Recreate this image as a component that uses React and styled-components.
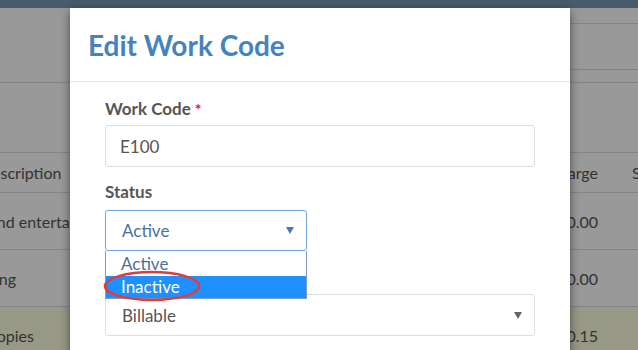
import styled, { createGlobalStyle } from "styled-components";

const GlobalStyle = createGlobalStyle`
  html, body {
    margin: 0;
    padding: 0;
    background: #ffffff;
    font-family: Lato, "Liberation Sans", sans-serif;
  }
`;

//background page
const Page = styled.div`
  position: relative;
  width: 638px;
  height: 350px;
  overflow: hidden;
  background: #ffffff;
  color: #555555;
`;

const TopBar = styled.div`
  height: 8px;
  background: #7b96b1;
`;

const PageHeader = styled.div`
  height: 75px;
  border-bottom: 1px solid #dddddd;
  display: flex;
  justify-content: flex-end;
  padding-top: 15px;
  box-sizing: border-box;
`;

const Toolbar = styled.div`
  width: 160px;
  height: 45px;
  border-top: 1px solid #dddddd;
  border-bottom: 1px solid #dddddd;
`;

const Spacer = styled.div`
  height: 69px;
`;

const Table = styled.div`
  display: grid;
  grid-template-columns: 582px 78px 60px;
  margin-left: -${(p) => p.$shift}px;
  width: 720px;
  font-size: 16px;
`;

const Row = styled.div`
  display: contents;
`;

const Cell = styled.div`
  height: ${(p) => (p.$head ? 39 : 56)}px;
  border-top: 1px solid #dddddd;
  display: flex;
  align-items: center;
  justify-content: ${(p) => (p.$right ? "flex-end" : "flex-start")};
  padding-left: ${(p) => p.$indent || 0}px;
  background: ${(p) => (p.$warn ? "#fefee0" : "transparent")};
  white-space: nowrap;
  overflow: hidden;
`;

const Backdrop = styled.div`
  position: absolute;
  inset: 0;
  background: rgba(0, 0, 0, 0.4);
`;

//modal
const Modal = styled.div`
  position: absolute;
  left: 70px;
  top: 8px;
  width: 500px;
  height: 360px;
  background: #ffffff;
  box-shadow: 0 3px 9px rgba(0, 0, 0, 0.5);
`;

const ModalHeader = styled.div`
  height: 73px;
  border-bottom: 1px solid #e5e5e5;
  padding: 0 18px;
  display: flex;
  align-items: center;
`;

const Title = styled.h4`
  margin: 0;
  font-size: 28px;
  font-weight: 700;
  color: #4583bf;
`;

const ModalBody = styled.div`
  padding: 17px 35px 0;
`;

const Group = styled.div`
  margin-bottom: 15px;
`;

const Label = styled.label`
  display: block;
  font-size: 17px;
  line-height: 20px;
  font-weight: 700;
  color: #555555;
  margin-bottom: ${(p) => p.$gap || 6}px;

  span {
    color: #e02020;
    font-size: 16px;
    margin-left: 4px;
  }
`;

const Input = styled.div`
  height: 42px;
  box-sizing: border-box;
  border: 1px solid #dddddd;
  border-radius: 3px;
  padding: 0 14px;
  display: flex;
  align-items: center;
  font-size: 17px;
  color: #555555;
`;

const SelectWrap = styled.div`
  position: relative;
  width: ${(p) => p.$width || "100%"};
`;

const Select = styled.div`
  height: ${(p) => (p.$focus ? 41 : 42)}px;
  box-sizing: border-box;
  border: 1px solid ${(p) => (p.$focus ? "#6ea1d9" : "#dddddd")};
  border-radius: 3px;
  padding: 0 12px 0 16px;
  display: flex;
  align-items: center;
  justify-content: space-between;
  font-size: 17px;
  color: ${(p) => (p.$focus ? "#4d6f9c" : "#555555")};
`;

const Arrow = styled.span`
  width: 0;
  height: 0;
  border-left: 4px solid transparent;
  border-right: 4px solid transparent;
  border-top: 7px solid ${(p) => (p.$focus ? "#4a7ab5" : "#666666")};
`;

const Options = styled.ul`
  position: absolute;
  left: 0;
  right: 0;
  top: 100%;
  margin: 0;
  padding: 0;
  list-style: none;
  border: 1px solid #7f9db9;
  border-top: none;
  background: #ffffff;
  z-index: 2;
`;

const Option = styled.li`
  height: ${(p) => (p.$selected ? 22 : 25)}px;
  line-height: ${(p) => (p.$selected ? 22 : 25)}px;
  padding-left: 15px;
  font-size: 17px;
  color: ${(p) => (p.$selected ? "#ffffff" : "#4d6f9c")};
  background: ${(p) => (p.$selected ? "#1e90ff" : "#ffffff")};
`;

const Mark = styled.svg`
  position: absolute;
  left: -3px;
  top: 20px;
  z-index: 3;
  overflow: visible;
`;

const rows = [
  { desc: "Meals and entertainment", indent: 5, charge: "0.00" },
  { desc: "Printing", indent: 23, charge: "0.00" },
  { desc: "Photocopies", indent: 9, charge: "0.15", warn: true },
];

const App = () => {
  return (
    <>
      <GlobalStyle />
      <Page>
        <TopBar />
        <PageHeader>
          <Toolbar />
        </PageHeader>
        <Spacer />
        <Table $shift={62}>
          <Row>
            <Cell $head $indent={42}>Description</Cell>
            <Cell $head $right>Charge</Cell>
            <Cell $head $indent={34}>Status</Cell>
          </Row>
          {rows.map((r) => (
            <Row key={r.desc}>
              <Cell $warn={r.warn} $indent={r.indent}>
                {r.desc}
              </Cell>
              <Cell $warn={r.warn} $right>
                {r.charge}
              </Cell>
              <Cell $warn={r.warn} />
            </Row>
          ))}
        </Table>
        <Backdrop />

        <Modal>
          <ModalHeader>
            <Title>Edit Work Code</Title>
          </ModalHeader>
          <ModalBody>
            <Group>
              <Label>
                Work Code<span>*</span>
              </Label>
              <Input>E100</Input>
            </Group>
            <Group>
              <Label $gap={8}>Status</Label>
              <SelectWrap $width="202px">
                <Select $focus>
                  Active
                  <Arrow $focus />
                </Select>
                <Options>
                  <Option>Active</Option>
                  <Option $selected>Inactive</Option>
                  <Mark width="100" height="32">
                    <ellipse
                      cx="49"
                      cy="15"
                      rx="47"
                      ry="14"
                      fill="none"
                      stroke="#e23b3b"
                      strokeWidth="2.5"
                    />
                  </Mark>
                </Options>
              </SelectWrap>
            </Group>
            <Group>
              <Label $gap={8}>Billing Type</Label>
              <Select>
                Billable
                <Arrow />
              </Select>
            </Group>
          </ModalBody>
        </Modal>
      </Page>
    </>
  );
};

export default App;
